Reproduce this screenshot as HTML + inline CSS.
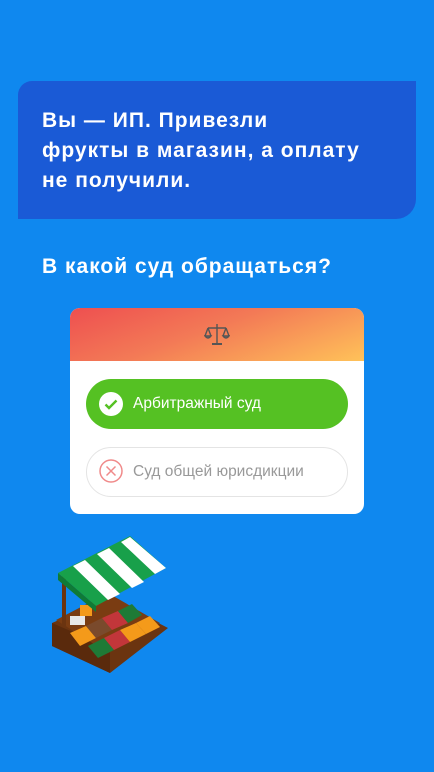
<!DOCTYPE html>
<html><head><meta charset="utf-8"><style>
body{margin:0;width:434px;height:772px;background:#0f88ef;font-family:"Liberation Sans",sans-serif;position:relative;overflow:hidden}
.box{position:absolute;left:18px;top:81px;width:398px;height:138px;background:#1a5ad6;border-radius:14px 0 20px 0;}
.t{position:absolute;left:42px;color:#fff;font-weight:bold;font-size:21px;line-height:30px;letter-spacing:1px;white-space:nowrap}
.card{position:absolute;left:70px;top:308px;width:294px;height:206px;background:#fff;border-radius:10px;overflow:hidden}
.hd{height:53px;background:linear-gradient(160deg,#ee4f50 0%,#f37a56 45%,#ffc259 100%);text-align:center}
.p{position:absolute;left:16px;width:262px;height:50px;border-radius:25px;font-size:15.5px;line-height:50px}
</style></head><body>
<div class="box"></div>
<div class="t" style="top:106px">Вы — ИП. Привезли<br>фрукты в магазин, а оплату<br>не получили.</div>
<div class="t" style="top:252px">В какой суд обращаться?</div>
<div class="card">
<div class="hd"><svg width="26" height="26" viewBox="0 0 26 26" style="margin-top:14px"><g stroke="#555" stroke-width="1.4" fill="none"><line x1="13" y1="2" x2="13" y2="21"/><line x1="4" y1="6" x2="22" y2="6"/><path d="M4 6 L1 14 M4 6 L7 14 M22 6 L19 14 M22 6 L25 14"/><path d="M1 14 Q4 18 7 14Z M19 14 Q22 18 25 14Z" fill="#777"/><line x1="8" y1="22" x2="18" y2="22" stroke-width="2"/></g></svg></div>
<div class="p" style="top:71px;background:#55c123;color:#fff"><svg width="24" height="24" style="position:absolute;left:13px;top:13px" viewBox="0 0 24 24"><circle cx="12" cy="12" r="12" fill="#fff"/><path d="M6.5 12.5l3.5 3.5 7.5-7.5" stroke="#55c123" stroke-width="2.4" fill="none"/></svg><span style="position:absolute;left:47px">Арбитражный суд</span></div>
<div class="p" style="top:139px;border:1.5px solid #e4e4e4;box-sizing:border-box;color:#999;line-height:47px"><svg width="24" height="24" style="position:absolute;left:12px;top:11px" viewBox="0 0 24 24"><circle cx="12" cy="12" r="11" fill="none" stroke="#f08a8a" stroke-width="1.5"/><path d="M7.5 7.5l9 9M16.5 7.5l-9 9" stroke="#f08a8a" stroke-width="1.5"/></svg><span style="position:absolute;left:46px">Суд общей юрисдикции</span></div>
</div>
<svg style="position:absolute;left:40px;top:528px" width="140" height="150" viewBox="0 0 140 150">
<polygon points="12,95 70,70 128,100 70,145 12,118" fill="#6b3410"/>
<polygon points="12,95 70,120 70,145 12,118" fill="#5a2a0c"/>
<polygon points="16,92 68,65 120,95 68,125" fill="#7a3c12"/>
<polygon points="30,105 46,98 56,110 40,118" fill="#f49a1a"/>
<polygon points="46,98 62,90 72,102 56,110" fill="#7a4a2c"/>
<polygon points="62,90 78,83 88,95 72,102" fill="#c2363a"/>
<polygon points="78,83 92,76 102,87 88,95" fill="#1e7a36"/>
<polygon points="48,118 64,110 74,122 58,130" fill="#1e7a36"/>
<polygon points="64,110 80,102 90,114 74,122" fill="#c2363a"/>
<polygon points="80,102 96,95 106,106 90,114" fill="#f49a1a"/>
<polygon points="96,95 110,88 120,99 106,106" fill="#f49a1a"/>
<rect x="22" y="43" width="4" height="55" fill="#6b3410"/>
<rect x="30" y="88" width="15" height="9" fill="#e8e8e8"/>
<rect x="40" y="77" width="12" height="11" fill="#f49a1a"/>
<polygon points="18,45 90,8 126,40 56,78" fill="#18a04a"/>
<polygon points="33,38 45,32 80,66 68,72" fill="#fff"/>
<polygon points="57,26 69,20 104,54 92,60" fill="#fff"/>
<polygon points="81,14 90,9 126,40 115,46" fill="#fff"/>
<polygon points="18,45 56,78 56,84 18,52" fill="#0f7a36"/>
</svg>
</body></html>
